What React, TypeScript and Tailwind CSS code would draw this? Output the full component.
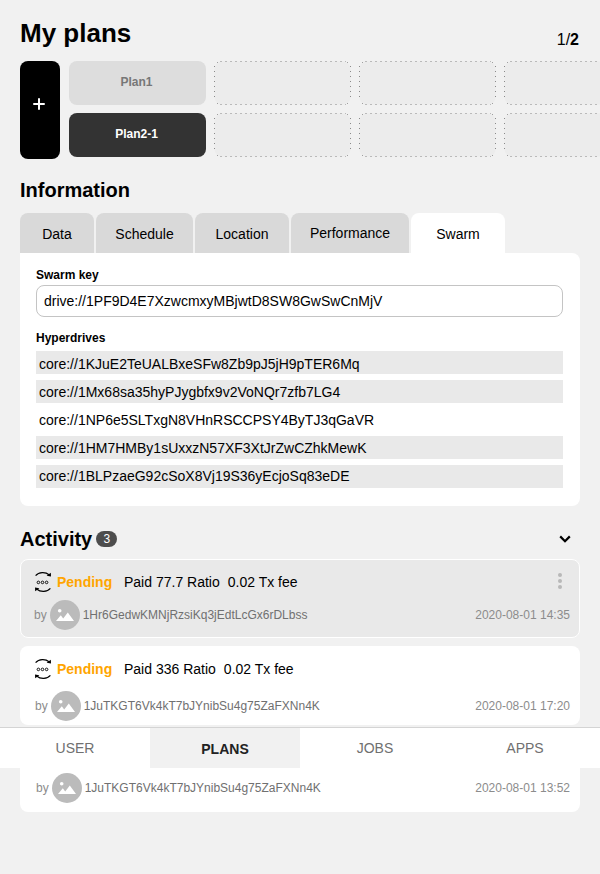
import React from "react";

const tabs = [
  { label: "Data", cls: "w-[74px] bg-[#d9d9d9]" },
  { label: "Schedule", cls: "w-[97px] bg-[#d9d9d9]" },
  { label: "Location", cls: "w-[94px] bg-[#d9d9d9]" },
  { label: "Performance", cls: "w-[118px] bg-[#d9d9d9] pb-0.5" },
  { label: "Swarm", cls: "w-[94px] bg-white" },
];

const drives = [
  { key: "core://1KJuE2TeUALBxeSFw8Zb9pJ5jH9pTER6Mq", cls: "bg-[#e9e9e9] leading-[26px]" },
  { key: "core://1Mx68sa35hyPJygbfx9v2VoNQr7zfb7LG4", cls: "bg-[#e9e9e9] mt-1.5 leading-[24px]" },
  { key: "core://1NP6e5SLTxgN8VHnRSCCPSY4ByTJ3qGaVR", cls: "mt-[5px] leading-[24px]" },
  { key: "core://1HM7HMBy1sUxxzN57XF3XtJrZwCZhkMewK", cls: "bg-[#e9e9e9] mt-[5px] leading-[24px]" },
  { key: "core://1BLPzaeG92cSoX8Vj19S36yEcjoSq83eDE", cls: "bg-[#e9e9e9] mt-1.5 leading-[22px]" },
];

function EmptySlot() {
  return (
    <svg className="block h-11 w-[137px] shrink-0" viewBox="0 0 137 44" fill="none">
      <rect x="0.5" y="0.5" width="136" height="43" rx="7.5" fill="#ececec" />
      <path d="M6 0.5H132M6 43.5H132" stroke="#bababa" strokeDasharray="2 3" />
      <path d="M0.5 5V40M136.5 5V40" stroke="#8a8a8a" strokeDasharray="1 4" />
      <path d="M3 1.5H4M133 1.5H134M3 42.5H4M133 42.5H134" stroke="#a0a0a0" />
    </svg>
  );
}

function PendingIcon() {
  return (
    <svg className="block h-[22px] w-[18px] shrink-0" viewBox="0 0 18 22" fill="none" stroke="#000">
      <path d="M1.6 4.6C4.8 0.8 11.6 0.6 15 3.8" strokeWidth="1.2" />
      <path d="M16.8 1.8L17 5.4L12.6 4.8Z" fill="#000" stroke="none" />
      <path d="M16.4 17.4C13.2 21.2 6.4 21.4 3 18.2" strokeWidth="1.2" />
      <path d="M1.2 20.2L1 16.6L5.4 17.2Z" fill="#000" stroke="none" />
      <circle cx="4.4" cy="11.4" r="1.3" strokeWidth="0.9" />
      <circle cx="8.5" cy="11.4" r="1.3" strokeWidth="0.9" />
      <circle cx="12.6" cy="11.4" r="1.3" strokeWidth="0.9" />
    </svg>
  );
}

function Avatar() {
  return (
    <svg className="block size-[30px] shrink-0" viewBox="0 0 30 30">
      <circle cx="15" cy="15" r="15" fill="#bbb" />
      <circle cx="9.7" cy="10.8" r="1.8" fill="#fff" />
      <path d="M6 21L10.8 15.2L13.2 18.6L17.8 12.4L24 21Z" fill="#fff" />
    </svg>
  );
}

function Author({ address, date }: { address: string; date: string }) {
  return (
    <div className="flex h-[30px] items-center text-[12px] text-[#707070]">
      <span className="mr-[3px] text-[#8c8c8c]">by</span>
      <Avatar />
      <span className="ml-[3px]">{address}</span>
      <span className="ml-auto text-[#8c8c8c]">{date}</span>
    </div>
  );
}

function Status({ amount }: { amount: string }) {
  return (
    <div className="flex h-[22px] items-center text-[14px]">
      <PendingIcon />
      <b className="ml-[5px] w-[67px] text-[#ffa500]">Pending</b>
      <span>Paid {amount} Ratio</span>
      <span className="ml-2">0.02 Tx fee</span>
    </div>
  );
}

export default function App() {
  return (
    <div className="relative h-[874px] w-[600px] overflow-hidden bg-[#f1f1f1] px-5 font-['Liberation_Sans',Arial,sans-serif] text-black">
      <header className="flex h-[61px] items-start justify-between">
        <h1 className="mt-[18px] text-[26px] leading-[30px] font-bold">My plans</h1>
        <div className="mt-[31px] pr-px text-[16px] leading-[18px]">
          1/<b>2</b>
        </div>
      </header>

      <section className="flex items-start">
        <button className="flex h-[98px] w-10 shrink-0 items-center justify-center rounded-lg bg-black pr-0.5 pb-3">
          <svg className="size-3" viewBox="0 0 12 12" stroke="#fff" strokeWidth="2" strokeLinecap="round">
            <path d="M6 1V11M1 6H11" />
          </svg>
        </button>
        <div className="ml-[9px] grid grid-cols-[repeat(4,137px)] gap-2 text-[12px] font-bold">
          <div className="flex h-11 items-center justify-center rounded-lg bg-[#ddd] pr-0.5 pb-0.5 text-[#777]">Plan1</div>
          <EmptySlot />
          <EmptySlot />
          <EmptySlot />
          <div className="flex h-11 items-center justify-center rounded-lg bg-[#333] pr-0.5 pb-0.5 text-white">Plan2-1</div>
          <EmptySlot />
          <EmptySlot />
          <EmptySlot />
        </div>
      </section>

      <h2 className="mt-5 text-[20px] leading-[23px] font-bold">Information</h2>
      <nav className="mt-[11px] flex gap-0.5 text-[14px]">
        {tabs.map((t) => (
          <div key={t.label} className={`flex h-10 items-center justify-center rounded-t-lg pt-0.5 ${t.cls}`}>
            {t.label}
          </div>
        ))}
      </nav>
      <section className="h-[253px] rounded-lg rounded-tl-none bg-white pt-[15px] pr-[17px] pl-4">
        <h3 className="text-[12px] leading-[14px] font-bold">Swarm key</h3>
        <div className="mt-[3px] flex h-8 items-center rounded-lg border border-[#c4c4c4] px-[7px] text-[14px]">
          drive://1PF9D4E7XzwcmxyMBjwtD8SW8GwSwCnMjV
        </div>
        <h3 className="mt-[14px] mb-[6px] text-[12px] leading-[14px] font-bold">Hyperdrives</h3>
        {drives.map((d) => (
          <div key={d.key} className={`h-[23px] pl-[3px] text-[14px] ${d.cls}`}>
            {d.key}
          </div>
        ))}
      </section>

      <div className="mt-[22px] flex h-[23px] items-center">
        <h2 className="text-[20px] leading-[23px] font-bold">Activity</h2>
        <span className="mb-px ml-1 flex h-4 w-[21px] items-center justify-center rounded-full bg-[#4d4d4d] text-[12px] text-white">3</span>
        <svg className="mr-[9px] mb-px ml-auto h-2 w-3" viewBox="0 0 12 8" fill="none" stroke="#000" strokeWidth="2.2">
          <path d="M1.2 1.4L6 6.2L10.8 1.4" />
        </svg>
      </div>

      <article className="mt-2 h-[79px] rounded-lg border border-white bg-[#e9e9e9] pt-[11px] pr-[9px] pl-[13px]">
        <div className="flex justify-between">
          <Status amount="77.7" />
          <svg className="mt-0.5 mr-2 h-4 w-1" viewBox="0 0 4 16" fill="#b8b8b8">
            <circle cx="2" cy="2" r="2" />
            <circle cx="2" cy="8" r="2" />
            <circle cx="2" cy="14" r="2" />
          </svg>
        </div>
        <div className="mt-[7px]">
          <Author address="1Hr6GedwKMNjRzsiKq3jEdtLcGx6rDLbss" date="2020-08-01 14:35" />
        </div>
      </article>
      <article className="mt-2 h-[79px] rounded-lg bg-white pt-3 pr-2.5 pl-3.5">
        <Status amount="336" />
        <div className="mt-[11px] pl-px">
          <Author address="1JuTKGT6Vk4kT7bJYnibSu4g75ZaFXNn4K" date="2020-08-01 17:20" />
        </div>
      </article>
      <article className="mt-2 h-[79px] rounded-lg bg-white pt-10 pr-2.5 pl-4">
        <Author address="1JuTKGT6Vk4kT7bJYnibSu4g75ZaFXNn4K" date="2020-08-01 13:52" />
      </article>

      <nav className="absolute top-[727px] left-0 grid h-[41px] w-full grid-cols-4 border-t border-[#d4d4d4] bg-white text-center text-[14px] leading-[40px] text-[#707070]">
        <div>USER</div>
        <div className="h-10 bg-[#f1f1f1] leading-[42px] font-bold text-[#222]">PLANS</div>
        <div>JOBS</div>
        <div>APPS</div>
      </nav>
    </div>
  );
}
